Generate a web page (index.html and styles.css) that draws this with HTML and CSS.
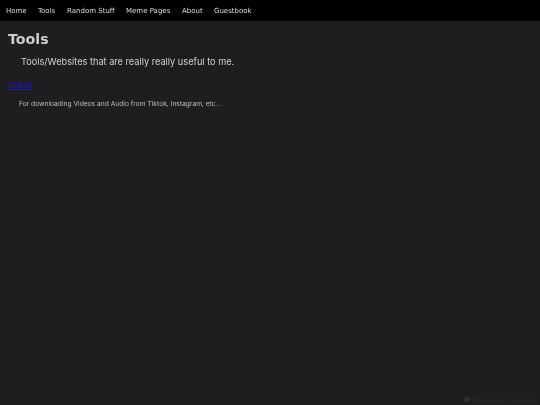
FILE: index.html
```html
<!DOCTYPE html>
<html>
<head>
<meta charset="utf-8">
<link rel="stylesheet" href="styles.css">
</head>
<body>
<nav class="nav">
  <a class="nav-item" href="#">Home</a>
  <a class="nav-item" href="#">Tools</a>
  <a class="nav-item" href="#">Random Stuff</a>
  <a class="nav-item" href="#">Meme Pages</a>
  <a class="nav-item" href="#">About</a>
  <a class="nav-item" href="#">Guestbook</a>
</nav>
<main class="content">
  <h1 class="title">Tools</h1>
  <p class="intro">Tools/Websites that are really really useful to me.</p>
  <a class="tool-link" href="#">Cobalt</a>
  <p class="tool-desc">For downloading Videos and Audio from Tiktok, Instagram, etc...</p>
</main>
<div class="badge">
  <svg class="badge-icon" width="6" height="5" viewBox="0 0 6 5"><rect x="0" y="0" width="6" height="5" rx="1" fill="#2c2c2e"/></svg>
  <span>Powered by Neocities</span>
</div>
</body>
</html>
```
FILE: styles.css
```css
html, body {
  margin: 0;
  padding: 0;
  height: 100%;
}
body {
  background: #1e1e20;
  color: #cfcfcf;
  font-family: "DejaVu Sans", sans-serif;
  overflow: hidden;
}
.nav {
  background: #000;
  height: 21px;
  display: flex;
  align-items: center;
  padding-left: 6px;
  gap: 11.5px;
}
.nav-item {
  color: #dcdcdc;
  text-decoration: none;
  font-size: 7px;
  font-family: "DejaVu Sans", sans-serif;
  will-change: transform;
}
.content {
  padding: 0 8px;
  will-change: transform;
}
.title {
  font-family: "DejaVu Sans", sans-serif;
  font-weight: bold;
  font-size: 14.2px;
  color: #cdcdcd;
  margin: 10px 0 0 0;
  line-height: 16px;
}
.intro {
  font-family: Inter, sans-serif;
  font-size: 9.2px;
  color: #d0d0d0;
  margin: 9px 0 0 13px;
  line-height: 12px;
}
.tool-link {
  display: inline-block;
  font-family: Inter, sans-serif;
  font-size: 7.8px;
  color: #1a1acc;
  margin-top: 12px;
  line-height: 10px;
}
.tool-desc {
  font-family: Inter, sans-serif;
  font-size: 6.68px;
  color: #bdbdbd;
  margin: 8px 0 0 11px;
  line-height: 9px;
}
.badge {
  position: absolute;
  right: 2px;
  bottom: 2px;
  display: flex;
  align-items: center;
  gap: 2px;
  font-family: "DejaVu Sans", sans-serif;
  font-size: 6.2px;
  color: #29292b;
  will-change: transform;
}
```
